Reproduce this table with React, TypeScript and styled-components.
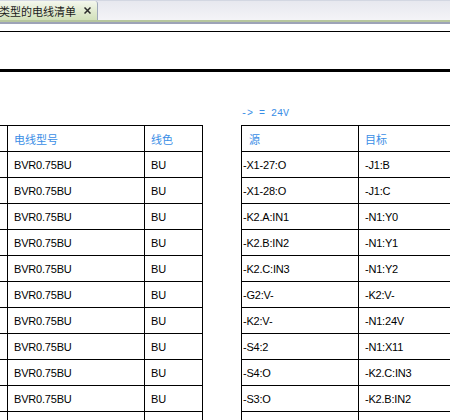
import React from "react";
import styled, { createGlobalStyle } from "styled-components";

const GlobalStyle = createGlobalStyle`
  html, body { margin: 0; padding: 0; background: #ffffff; }
  body { overflow: hidden; }
  * { box-sizing: border-box; }
`;

const Page = styled.div`
  width: 450px;
  height: 420px;
  overflow: hidden;
  background: #ffffff;
  font-family: "Liberation Sans", "Noto Sans CJK SC", sans-serif;
`;

const TabStrip = styled.div`
  height: 20px;
  display: flex;
  align-items: flex-end;
  border-top: 1px solid #d3d7e2;
  background: linear-gradient(#e7e8ef, #f4f4f7);
`;

const Tab = styled.div`
  height: 19px;
  margin-left: -1px;
  padding-right: 6px;
  display: flex;
  align-items: center;
  gap: 8px;
  border-right: 1px solid #9fa9b9;
  border-top-right-radius: 3px;
  background: linear-gradient(#f4f7ee, #dfe9cd 60%, #d2e1bb);
  font-family: "Noto Sans CJK SC", sans-serif;
  font-size: 11px;
  color: #1a1a1a;
  white-space: nowrap;
`;

const TabUnderline = styled.div`
  height: 4px;
  border-top: 2px solid #b7c79e;
  border-bottom: 2px solid #9da3b7;
`;

const Sheet = styled.div`
  display: flex;
  flex-direction: column;
`;

const ThinRule = styled.div`
  margin-top: 7px;
  height: 1px;
  background: #000;
`;

const ThickRule = styled.div`
  margin-top: 37px;
  height: 3px;
  background: #000;
`;

const Lists = styled.div`
  margin-top: 35px;
  display: flex;
  align-items: flex-end;
  gap: 38px;
`;

const Column = styled.div`
  display: flex;
  flex-direction: column;
`;

const Caption = styled.div`
  height: 18px;
  font-family: "Liberation Mono", monospace;
  font-size: 10px;
  line-height: 13px;
  color: #3a8ee6;
`;

const Grid = styled.div<{ $cols: string; $offset?: number }>`
  display: grid;
  grid-template-columns: ${(p) => p.$cols};
  border-top: 1px solid #000;
  border-left: 1px solid #000;
  margin-left: ${(p) => (p.$offset ? `${p.$offset}px` : "0")};
`;

const Cell = styled.div<{ $head?: boolean; $pad?: number }>`
  height: 26px;
  display: flex;
  align-items: center;
  padding-left: ${(p) => p.$pad ?? 6}px;
  border-right: 1px solid #000;
  border-bottom: 1px solid #000;
  font-family: ${(p) =>
    p.$head
      ? `"Noto Sans CJK SC", sans-serif`
      : `"Liberation Sans", "Noto Sans CJK SC", sans-serif`};
  font-size: 11px;
  letter-spacing: ${(p) => (p.$head ? "0" : "-0.2px")};
  color: ${(p) => (p.$head ? "#3a8ee6" : "#000")};
  white-space: nowrap;
  overflow: hidden;
`;

const CloseIcon = () => (
  <svg width="7" height="7" viewBox="0 0 7 7">
    <path d="M0.5 0.5 L6.5 6.5 M6.5 0.5 L0.5 6.5" stroke="#2b2b2b" strokeWidth="1.5" />
  </svg>
);

const rows: [string, string][] = [
  ["-X1-27:O", "-J1:B"],
  ["-X1-28:O", "-J1:C"],
  ["-K2.A:IN1", "-N1:Y0"],
  ["-K2.B:IN2", "-N1:Y1"],
  ["-K2.C:IN3", "-N1:Y2"],
  ["-G2:V-", "-K2:V-"],
  ["-K2:V-", "-N1:24V"],
  ["-S4:2", "-N1:X11"],
  ["-S4:O", "-K2.C:IN3"],
  ["-S3:O", "-K2.B:IN2"],
  ["", ""],
];

export default function App() {
  return (
    <Page>
      <GlobalStyle />
      <TabStrip>
        <Tab>
          <span>类型的电线清单</span>
          <CloseIcon />
        </Tab>
      </TabStrip>
      <TabUnderline />
      <Sheet>
        <ThinRule />
        <ThickRule />
        <Lists>
          <Column>
            <Grid $cols="47px 137px 58px" $offset={-40}>
              <Cell $head />
              <Cell $head>电线型号</Cell>
              <Cell $head>线色</Cell>
              {rows.map((_, i) => (
                <React.Fragment key={i}>
                  <Cell />
                  <Cell>BVR0.75BU</Cell>
                  <Cell>BU</Cell>
                </React.Fragment>
              ))}
            </Grid>
          </Column>
          <Column>
            <Caption>-&gt; = 24V</Caption>
            <Grid $cols="117px 120px">
              <Cell $head $pad={7}>源</Cell>
              <Cell $head>目标</Cell>
              {rows.map(([a, b], i) => (
                <React.Fragment key={i}>
                  <Cell $pad={1}>{a}</Cell>
                  <Cell>{b}</Cell>
                </React.Fragment>
              ))}
            </Grid>
          </Column>
        </Lists>
      </Sheet>
    </Page>
  );
}
